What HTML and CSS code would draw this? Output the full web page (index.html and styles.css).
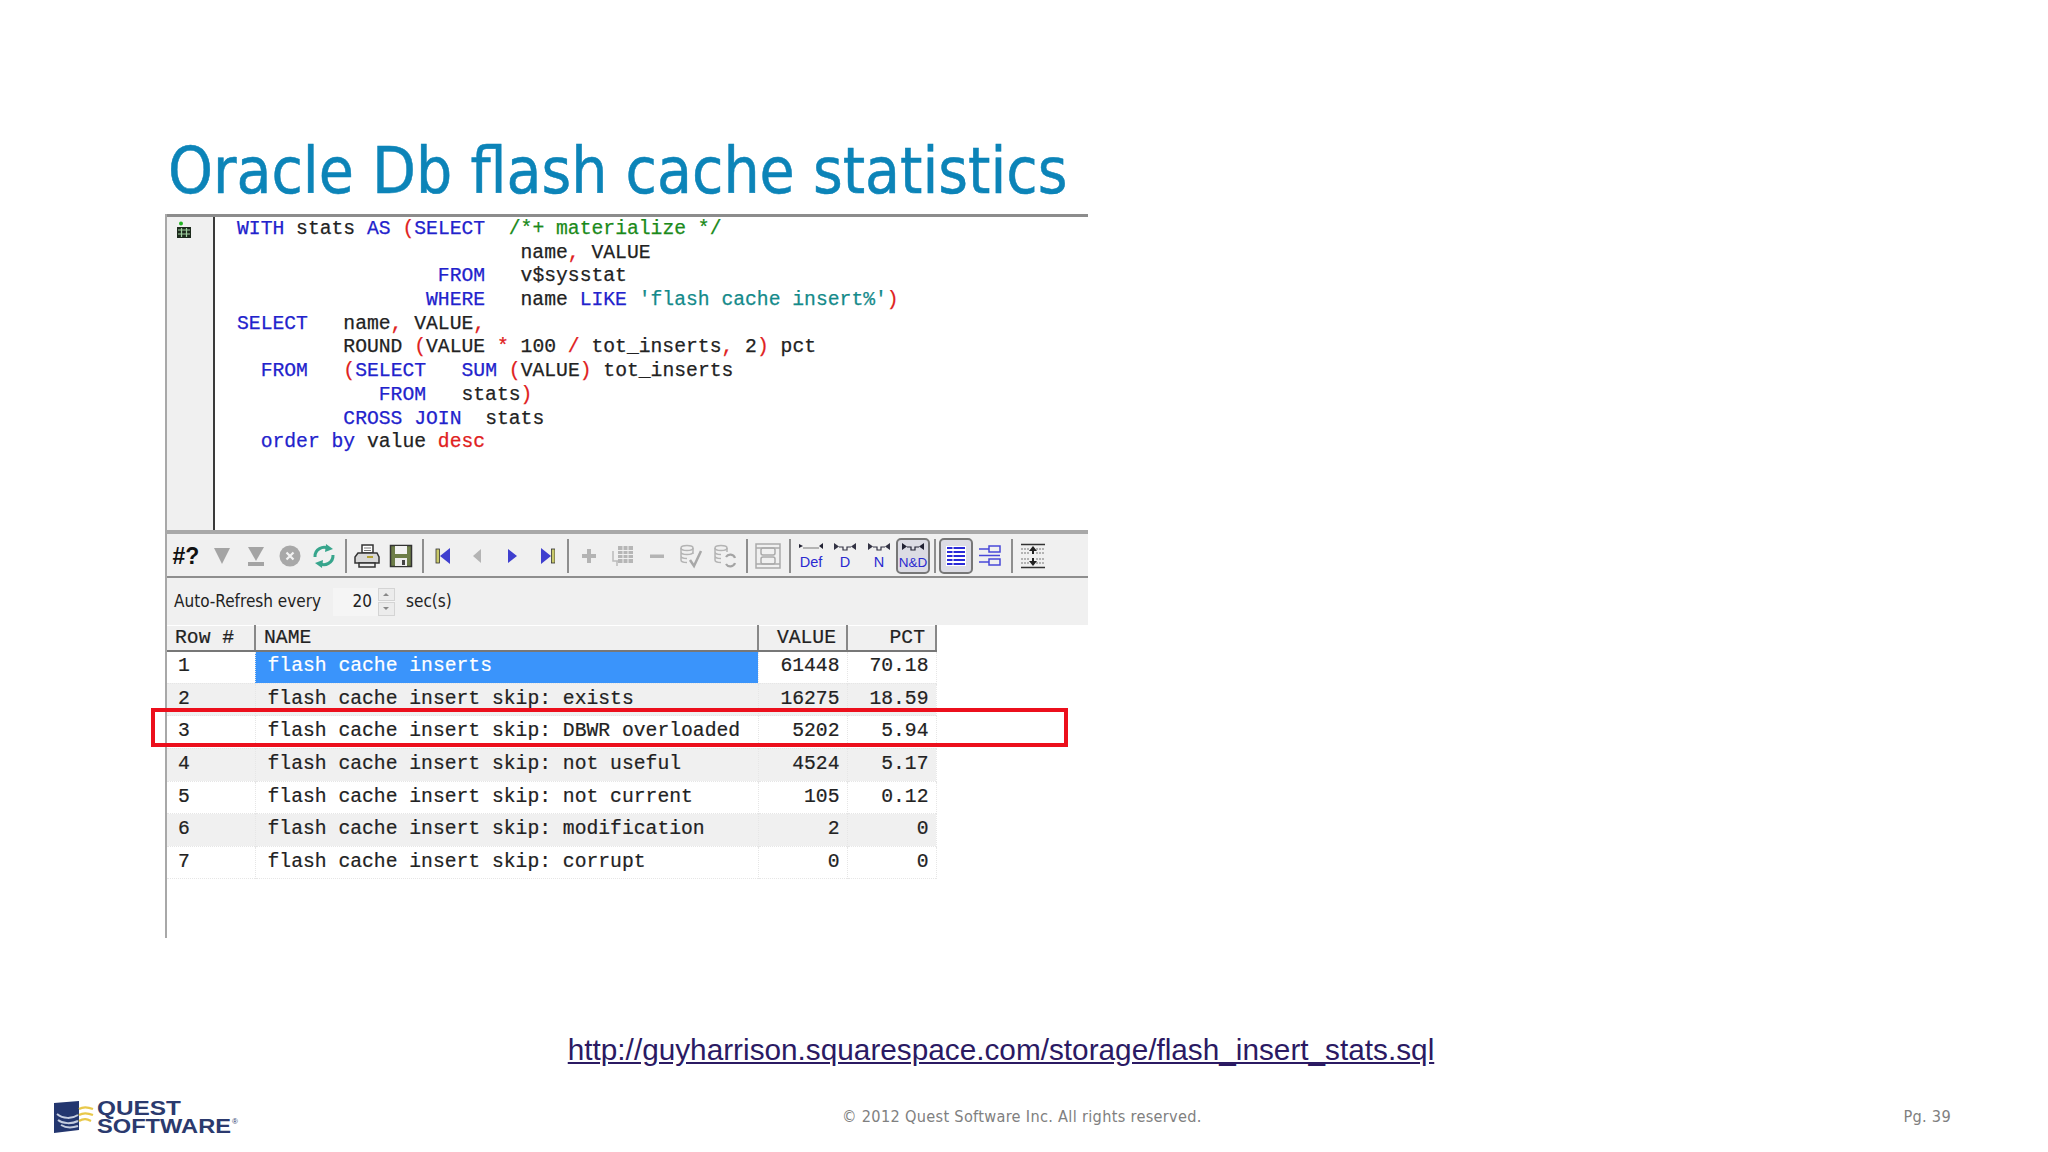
FILE: index.html
```html
<!DOCTYPE html>
<html lang="en">
<head>
<meta charset="utf-8">
<title>Oracle Db flash cache statistics</title>
<link rel="stylesheet" href="styles.css">
</head>
<body>
<div class="slide">
  <h1 class="title">Oracle Db flash cache statistics</h1>
  <section class="panel">
    <div class="editor">
      <div class="gutter">
        <svg class="gutter-icon" width="16" height="18" viewBox="0 0 16 18"><circle cx="5" cy="2.500" r="2" fill="#22b422"/><rect x="1" y="6" width="14" height="11" fill="#1c2a1c"/><path d="M2 9h12M2 13h12M5.500 7v9M10.500 7v9" stroke="#9fd09f" stroke-width="1.200"/></svg>
      </div>
      <div class="code">
        <div class="ln"><b>WITH</b> stats <b>AS</b> <i>(</i><b>SELECT</b>  <em>/*+ materialize */</em></div>
        <div class="ln">                        name<i>,</i> VALUE</div>
        <div class="ln">                 <b>FROM</b>   v$sysstat</div>
        <div class="ln">                <b>WHERE</b>   name <b>LIKE</b> <u>'flash cache insert%'</u><i>)</i></div>
        <div class="ln"><b>SELECT</b>   name<i>,</i> VALUE<i>,</i></div>
        <div class="ln">         ROUND <i>(</i>VALUE <i>*</i> 100 <i>/</i> tot_inserts<i>,</i> 2<i>)</i> pct</div>
        <div class="ln">  <b>FROM</b>   <i>(</i><b>SELECT</b>   <b>SUM</b> <i>(</i>VALUE<i>)</i> tot_inserts</div>
        <div class="ln">            <b>FROM</b>   stats<i>)</i></div>
        <div class="ln">         <b>CROSS JOIN</b>  stats</div>
        <div class="ln">  <b>order by</b> value <s>desc</s></div>
      </div>
    </div>

    <div class="toolbar">
      <span class="tool hash">#?</span>
      <span class="tool"><svg width="24" height="24" viewBox="0 0 24 24"><path d="M4 4h16l-8 16z" fill="#a4a4a4"/></svg></span>
      <span class="tool"><svg width="24" height="24" viewBox="0 0 24 24"><path d="M4 3h16l-8 14z" fill="#a4a4a4"/><rect x="4" y="18" width="16" height="4" fill="#a4a4a4"/></svg></span>
      <span class="tool"><svg width="24" height="24" viewBox="0 0 24 24"><circle cx="12" cy="12" r="10.500" fill="#a8a8a8"/><path d="M8.500 8.500l7 7M15.500 8.500l-7 7" stroke="#f2f2f2" stroke-width="2.200"/></svg></span>
      <span class="tool"><svg width="26" height="26" viewBox="0 0 26 26" fill="none"><path d="M4 14a9 9 0 0 1 14-8" stroke="#37a58c" stroke-width="3"/><path d="M15 1l7 5-8 3z" fill="#37a58c"/><path d="M22 12a9 9 0 0 1-14 8" stroke="#37a58c" stroke-width="3"/><path d="M11 25l-7-5 8-3z" fill="#37a58c"/></svg></span>
      <span class="sep"></span>
      <span class="tool"><svg width="26" height="26" viewBox="0 0 26 26"><path d="M8 2h11v8H8z" fill="#fff" stroke="#333" stroke-width="1.500"/><path d="M10 5h7M10 7.500h7" stroke="#777"/><path d="M4 10h19l2 4v6H1v-6z" fill="#d8d8d8" stroke="#333" stroke-width="1.500"/><path d="M13 14h6" stroke="#b3a030" stroke-width="2"/><path d="M5 20h16v4H5z" fill="#eee" stroke="#333" stroke-width="1.500"/></svg></span>
      <span class="tool"><svg width="24" height="24" viewBox="0 0 24 24"><rect x="1.500" y="1.500" width="21" height="21" fill="#6d7d48" stroke="#333" stroke-width="1.500"/><rect x="6" y="2" width="12" height="8" fill="#f2f2f2"/><rect x="6" y="14" width="12" height="8" fill="#ededed"/><rect x="13" y="16" width="3" height="5" fill="#444"/></svg></span>
      <span class="sep"></span>
      <span class="tool"><svg width="18" height="18" viewBox="1 0 18 18"><rect x="2" y="2" width="3.500" height="14" fill="#c9c96a" stroke="#333" stroke-width=".8"/><path d="M16 1v16L6 9z" fill="#3f3fcf"/></svg></span>
      <span class="tool"><svg width="18" height="18" viewBox="1 0 18 18"><path d="M13 2v14L5 9z" fill="#b4b4b4"/></svg></span>
      <span class="tool"><svg width="18" height="18" viewBox="0 0 18 18"><path d="M5 2v14l9-7z" fill="#3f3fcf"/></svg></span>
      <span class="tool"><svg width="18" height="18" viewBox="-2 0 18 18"><path d="M2 1v16l10-8z" fill="#3f3fcf"/><rect x="12.500" y="2" width="3.500" height="14" fill="#c9c96a" stroke="#333" stroke-width=".8"/></svg></span>
      <span class="sep"></span>
      <span class="tool"><svg width="18" height="18" viewBox="0 0 18 18"><path d="M7 2h4v5h5v4h-5v5H7v-5H2V7h5z" fill="#b4b4b4"/></svg></span>
      <span class="tool"><svg width="24" height="24" viewBox="0 0 24 24"><rect x="7" y="2" width="15" height="17" fill="#b6b6b6"/><path d="M7 6.500h15M7 10.500h15M7 14.500h15M12 2v17M17 2v17" stroke="#f0f0f0" stroke-width="1"/><path d="M2 7v10h5M6 22v-5" stroke="#bbb" stroke-width="1.500" fill="none"/></svg></span>
      <span class="tool"><svg width="18" height="18" viewBox="0 0 18 18"><rect x="2" y="7.500" width="14" height="3.500" fill="#b4b4b4"/></svg></span>
      <span class="tool"><svg width="26" height="26" viewBox="0 0 26 26" fill="none" stroke="#b4b4b4" stroke-width="1.500"><ellipse cx="9" cy="5" rx="6" ry="2.500"/><path d="M3 5v12c0 1.500 3 2.500 6 2.500M15 5v6M3 9c0 1.500 3 2.500 6 2.500s6-1 6-2.500M3 13c0 1.500 3 2.500 6 2.500"/><path d="M12 17l4 6 7-15" stroke="#a8a8a8" stroke-width="2.500"/></svg></span>
      <span class="tool"><svg width="26" height="26" viewBox="0 0 26 26" fill="none" stroke="#b4b4b4" stroke-width="1.500"><ellipse cx="9" cy="5" rx="6" ry="2.500"/><path d="M3 5v12c0 1.500 3 2.500 6 2.500M15 5v4M3 9c0 1.500 3 2.500 6 2.500M3 13c0 1.500 3 2.500 6 2.500"/><path d="M14 14a5 5 0 0 1 9 1M23 20a5 5 0 0 1-9 1" stroke="#a4a4a4" stroke-width="2.200"/></svg></span>
      <span class="sep"></span>
      <span class="tool"><svg width="26" height="26" viewBox="0 0 26 26" fill="none" stroke="#aaa" stroke-width="1.500"><rect x="1" y="1" width="24" height="24"/><path d="M1 5h24M1 21h24"/><rect x="6" y="5" width="14" height="7" rx="2"/><rect x="6" y="14" width="14" height="7" rx="2"/></svg></span>
      <span class="sep"></span>
      <span class="tool"><svg width="26" height="30" viewBox="0 0 26 30"><path d="M1 3l4 2-4 2zM25 2v6l-4-3z" fill="#223"/><path d="M5 7h16" stroke="#777"/><text x="13" y="26" class="jt">Def</text></svg></span>
      <span class="tool"><svg width="26" height="30" viewBox="0 0 26 30"><path d="M2 2v7l5-3.500zM24 2v7l-5-3.500z" fill="#334"/><path d="M7 6h4v3h4V6h4" stroke="#334" fill="none" stroke-width="1.200"/><text x="13" y="26" class="jt">D</text></svg></span>
      <span class="tool"><svg width="26" height="30" viewBox="0 0 26 30"><path d="M2 2v7l5-3.500zM24 2v7l-5-3.500z" fill="#334"/><path d="M7 6h4v3h4V6h4" stroke="#334" fill="none" stroke-width="1.200"/><text x="13" y="26" class="jt">N</text></svg></span>
      <span class="tool active"><svg width="30" height="32" viewBox="0 0 30 32"><path d="M4 3v7l5-3.500zM26 3v7l-5-3.500z" fill="#223"/><path d="M9 7h4v3h4V7h4" stroke="#223" fill="none" stroke-width="1.200"/><text x="15" y="27" class="jt jt-wide">N&amp;D</text></svg></span>
      <span class="sep"></span>
      <span class="tool active"><svg width="24" height="24" viewBox="0 0 24 24"><rect x="2" y="2" width="20" height="20" fill="#fff"/><path d="M3 4h18M3 8h18M3 12h18M3 16h18M3 20h18" stroke="#2a2ad8" stroke-width="2"/><path d="M9 3v18" stroke="#fff"/></svg></span>
      <span class="tool"><svg width="24" height="24" viewBox="0 0 24 24" fill="none" stroke="#4848d8" stroke-width="1.500"><rect x="11" y="2" width="11" height="6"/><rect x="11" y="15" width="11" height="6"/><path d="M1 11.500h21M1 5h10M1 18h10"/></svg></span>
      <span class="sep"></span>
      <span class="tool"><svg width="26" height="26" viewBox="0 0 26 26"><path d="M1 1.500h24M1 24.500h24" stroke="#333" stroke-width="1.600"/><path d="M1 6h9M16 6h9M1 10h9M16 10h9M1 16h9M16 16h9M1 20h9M16 20h9" stroke="#777" stroke-dasharray="2 1"/><path d="M13 3l4 5h-3v3h-2V8H9zM13 23l4-5h-3v-3h-2v3H9z" fill="#222"/></svg></span>
    </div>

    <div class="refresh">
      <span>Auto-Refresh every</span>
      <span class="spin"><span class="spin-value">20</span><span class="spin-arrows"><span class="up"></span><span class="down"></span></span></span>
      <span>sec(s)</span>
    </div>

    <div class="grid-wrap">
      <table class="grid">
        <colgroup><col class="c-row"><col class="c-name"><col class="c-num"><col class="c-num"></colgroup>
        <thead>
          <tr><th class="th-row">Row #</th><th>NAME</th><th class="num">VALUE</th><th class="num">PCT</th></tr>
        </thead>
        <tbody>
          <tr><td class="rn">1</td><td class="nm selected">flash cache inserts</td><td class="num">61448</td><td class="num">70.18</td></tr>
          <tr><td class="rn">2</td><td class="nm">flash cache insert skip: exists</td><td class="num">16275</td><td class="num">18.59</td></tr>
          <tr><td class="rn">3</td><td class="nm">flash cache insert skip: DBWR overloaded</td><td class="num">5202</td><td class="num">5.94</td></tr>
          <tr><td class="rn">4</td><td class="nm">flash cache insert skip: not useful</td><td class="num">4524</td><td class="num">5.17</td></tr>
          <tr><td class="rn">5</td><td class="nm">flash cache insert skip: not current</td><td class="num">105</td><td class="num">0.12</td></tr>
          <tr><td class="rn">6</td><td class="nm">flash cache insert skip: modification</td><td class="num">2</td><td class="num">0</td></tr>
          <tr><td class="rn">7</td><td class="nm">flash cache insert skip: corrupt</td><td class="num">0</td><td class="num">0</td></tr>
        </tbody>
      </table>
      <div class="highlight"></div>
    </div>
  </section>

  <p class="link-line"><a class="link" href="#">http://guyharrison.squarespace.com/storage/flash_insert_stats.sql</a></p>

  <footer class="footer">
    <svg class="logo" width="186" height="38" viewBox="0 0 186 38">
      <path d="M0 5l25-2v29l-25 3z" fill="#23366f"/>
      <path d="M3 16c6 5 15 5 21 1M4 22c5 4 14 4 20 1M7 27c5 3 11 3 17 1" stroke="#c5cde0" stroke-width="2" fill="none"/>
      <path d="M25 11c5-3 9-2 14 0M25 17c5-3 9-2 14 0M25 23c5-3 8-2 12 0" stroke="#e8c84a" stroke-width="2.200" fill="none"/>
      <text class="logo-word" x="43" y="17" textLength="84" lengthAdjust="spacingAndGlyphs">QUEST</text>
      <text class="logo-word" x="43" y="35" textLength="134" lengthAdjust="spacingAndGlyphs">SOFTWARE</text>
      <text class="logo-reg" x="178" y="26">®</text>
    </svg>
    <div class="copy">© 2012 Quest Software Inc. All rights reserved.</div>
    <div class="page">Pg. 39</div>
  </footer>
</div>
</body>
</html>
```
FILE: styles.css
```css
* { box-sizing: border-box; }
html, body { margin: 0; padding: 0; background: #fff; }
.slide { width: 2048px; height: 1152px; overflow: hidden; display: flex; flex-direction: column; background: #fff; }

.title { margin: 0; padding: 134px 0 0 168px; height: 214px; font: 400 63.500px/74px "DejaVu Sans Condensed", "DejaVu Sans", sans-serif; color: #0c84b8; -webkit-text-stroke: .5px #0c84b8; white-space: nowrap; flex: none; }

.panel { margin-left: 165px; width: 923px; height: 724px; border-left: 2px solid #a8a8a8; display: flex; flex-direction: column; flex: none; }

.editor { height: 316px; border-top: 3px solid #8c8c8c; display: flex; flex: none; }
.gutter { width: 48px; background: #f0f0f0; border-right: 2px solid #3a3a3a; padding: 4px 0 0 9px; flex: none; }
.gutter-icon { display: block; }
.code { padding: 1px 0 0 22px; font: 400 19.700px/23.700px "Liberation Mono", "Courier New", monospace; color: #222; -webkit-text-stroke: .25px #222; }
.ln { white-space: pre; height: 23.700px; }
.code b { font-weight: 400; color: #2222cc; -webkit-text-stroke-color: #2222cc; }
.code i { font-style: normal; color: #e02020; -webkit-text-stroke-color: #e02020; }
.code em { font-style: normal; color: #1a8a1a; -webkit-text-stroke-color: #1a8a1a; }
.code u { text-decoration: none; color: #148a8a; -webkit-text-stroke-color: #148a8a; }
.code s { text-decoration: none; color: #e02020; -webkit-text-stroke-color: #e02020; }

.toolbar { height: 48px; background: #f0f0f0; border-top: 4px solid #a8a8a8; border-bottom: 2px solid #8e8e8e; display: flex; align-items: center; padding: 2px 0 0 4px; flex: none; }
.tool { width: 34px; height: 36px; display: flex; align-items: center; justify-content: center; flex: none; }
.tool.active { background: #dcdce4; border: 2px solid #777; border-radius: 5px; }
.hash { font: 700 23px/1 "Liberation Sans", Arial, sans-serif; color: #111; margin-left: -2px; margin-right: 2px; }
.sep { width: 9px; height: 34px; flex: none; display: flex; justify-content: center; }
.sep::before { content: ""; width: 2px; background: #8e8e8e; }
.jt { font: 400 14.500px "Liberation Sans", Arial, sans-serif; fill: #2a2ad0; text-anchor: middle; }
.jt-wide { font-size: 13.500px; }

.refresh { height: 47px; background: #f0f0f0; display: flex; align-items: center; padding-left: 7px; font: 400 17px/1 "DejaVu Sans Condensed", "Noto Sans", sans-serif; color: #222; flex: none; }
.spin { width: 62px; height: 28px; margin: 0 11px 0 12px; background: #f5f5f5; display: flex; justify-content: flex-end; align-items: center; }
.spin-value { margin-right: 6px; }
.spin-arrows { width: 17px; height: 28px; display: flex; flex-direction: column; gap: 1px; }
.up, .down { flex: 1; background: #ececec; border: 1px solid #d4d4d4; position: relative; }
.up::after, .down::after { content: ""; position: absolute; left: 4px; border: 3px solid transparent; }
.up::after { border-bottom-color: #888; top: 1px; }
.down::after { border-top-color: #888; top: 4px; }

.grid-wrap { position: relative; flex: 1; }
.grid-wrap::before { content: ""; position: absolute; left: 0; right: 0; top: 0; height: 25px; background: #f0f0f0; z-index: -1; }
.grid { border-collapse: collapse; table-layout: fixed; width: 769px; font: 400 19.700px/1 "Liberation Mono", "Courier New", monospace; color: #222; -webkit-text-stroke: .2px #222; }
.c-row { width: 88px; }
.c-name { width: 503px; }
.c-num { width: 89px; }
.grid th { height: 25px; padding: 3px 0 0 8px; background: #f0f0f0; text-align: left; font-weight: 400; border-right: 2px solid #888; border-bottom: 2px solid #777; border-top: 1px solid #fff; white-space: nowrap; }
.grid th.num { text-align: right; padding: 3px 10px 0 0; }
.grid td { height: 32.650px; padding: 0; border-right: 1px dotted #e6e6e6; white-space: nowrap; }
.grid tbody tr { border-bottom: 1px dotted #e6e6e6; }
.grid tbody tr:nth-child(even) td { background: #f0f0f0; }
.grid td.rn { padding-left: 11px; }
.grid td.nm { padding-left: 12px; }
.grid td.num { text-align: right; padding-right: 7px; }
.grid td.selected { background: #3a94fb; color: #fff; -webkit-text-stroke-color: #fff; }

.highlight { position: absolute; left: -16px; top: 83px; width: 917px; height: 39px; border: 4px solid #ec0f1c; }

.link-line { margin: 94px 0 0; padding-right: 46px; text-align: center; height: 36px; font: 400 29.750px/36px "Liberation Sans", Arial, sans-serif; flex: none; }
.link { color: #2b1a63; text-decoration: underline; }

.footer { margin-top: 29px; height: 40px; padding: 0 97px 0 54px; display: grid; grid-template-columns: 788px auto 1fr; align-items: center; font: 400 16.200px/1 "DejaVu Sans Condensed", "Noto Sans", sans-serif; color: #808080; flex: none; }
.logo { display: block; }
.logo-word { font: 700 20px "Liberation Sans", Arial, sans-serif; fill: #2b3a6e; }
.logo-reg { font: 400 8px "Liberation Sans", Arial, sans-serif; fill: #2b3a6e; }
.copy { letter-spacing: .3px; }
.page { text-align: right; letter-spacing: .3px; }
```
